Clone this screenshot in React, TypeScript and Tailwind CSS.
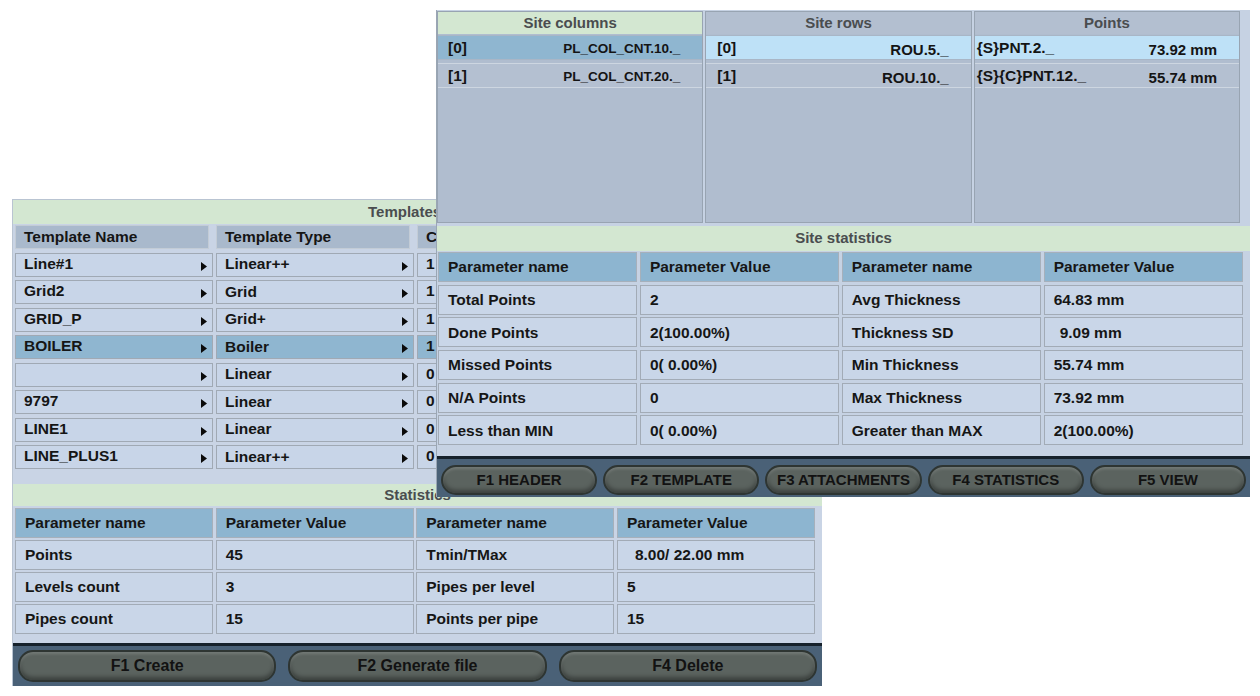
import React from "react";

const templates = [
  ["Line#1", "Linear++", "1"],
  ["Grid2", "Grid", "1"],
  ["GRID_P", "Grid+", "1"],
  ["BOILER", "Boiler", "1"],
  ["", "Linear", "0"],
  ["9797", "Linear", "0"],
  ["LINE1", "Linear", "0"],
  ["LINE_PLUS1", "Linear++", "0"],
];

const templateStats = [
  ["Points", "45", "Tmin/TMax", "8.00/ 22.00 mm", 8],
  ["Levels count", "3", "Pipes per level", "5", 0],
  ["Pipes count", "15", "Points per pipe", "15", 0],
] as const;

const siteStats = [
  ["Total Points", "2", "Avg Thickness", "64.83 mm", 0],
  ["Done Points", "2(100.00%)", "Thickness SD", "9.09 mm", 6],
  ["Missed Points", "0( 0.00%)", "Min Thickness", "55.74 mm", 0],
  ["N/A Points", "0", "Max Thickness", "73.92 mm", 0],
  ["Less than MIN", "0( 0.00%)", "Greater than MAX", "2(100.00%)", 0],
] as const;

function Arrow() {
  return (
    <svg width="6" height="9" viewBox="0 0 6 9" className="absolute right-[5px] top-[8px]">
      <polygon points="0,0 6,4.5 0,9" fill="#0a0a0a" />
    </svg>
  );
}

function FKey({ label, small }: { label: string; small?: boolean }) {
  return (
    <div
      className={`h-full rounded-[15px] border-2 border-[#2e3532] bg-[#5b635f] shadow-[inset_0_2px_3px_rgba(255,255,255,0.16),inset_0_-3px_4px_rgba(0,0,0,0.35)] flex items-center justify-center font-bold text-[#121212] whitespace-nowrap ${
        small ? "text-[15px]" : "text-[16px]"
      }`}
    >
      {label}
    </div>
  );
}

function StatsHeader() {
  return (
    <>
      {["Parameter name", "Parameter Value", "Parameter name", "Parameter Value"].map((h, i) => (
        <div
          key={i}
          className="h-[30px] bg-[#8db5d0] border border-[#a6b0bb] flex items-center pl-[9px] font-bold text-[15.5px] text-[#161616]"
        >
          {h}
        </div>
      ))}
    </>
  );
}

function StatCell({ text, indent = 0 }: { text: string; indent?: number }) {
  return (
    <div className="h-[30px] bg-[#c9d6e8] border border-[#a2abb6] flex items-center pl-[9px] font-bold text-[15.5px] text-[#161616] whitespace-pre">
      <span style={{ marginLeft: indent }}>{text}</span>
    </div>
  );
}

function SitePanel({
  title,
  active,
  rows,
  firstBg,
  padLeft,
}: {
  title: string;
  active: boolean;
  rows: { left: string; right: string; small: boolean }[];
  firstBg: string;
  padLeft: string;
}) {
  return (
    <div className="flex flex-col border border-[#98a4b2] bg-[#b0bdcf]">
      <div
        className={`h-[22px] flex items-center justify-center text-[15px] font-bold text-[#4a4d4f] ${
          active ? "bg-[#d3e7d1]" : "bg-[#b3bfd0]"
        }`}
      >
        {title}
      </div>
      <div className="flex flex-col gap-[3px] pt-[1px]">
        {rows.map((r, i) => (
          <div
            key={i}
            className={`h-[25px] flex justify-between ${padLeft} pr-[22px] border-y ${
              i === 0 ? `${firstBg} border-[#a9b6c6]` : "bg-[#b4c0d1] border-[#cdd6e1]"
            }`}
          >
            <span className="self-end text-[15.5px] font-bold text-[#141414]">{r.left}</span>
            <span
              className={`self-start pt-[3px] font-bold text-[#141414] ${
                r.small ? "text-[13.5px]" : "text-[15px]"
              }`}
            >
              {r.right}
            </span>
          </div>
        ))}
      </div>
    </div>
  );
}

export default function App() {
  return (
    <div className="relative w-[1260px] h-[696px] bg-white overflow-hidden font-['Liberation_Sans',Arial,sans-serif]">
      {/* Templates window */}
      <div className="absolute left-[12px] top-[199px] w-[810px] h-[487px] bg-[#c9d4e5] border-l border-t border-[#b9c4d2] flex flex-col">
        <div className="h-[24px] bg-[#d3e7d1] flex items-center justify-center text-[15px] font-bold text-[#4a4d4f]">
          Templates list
        </div>
        <div className="grid grid-cols-4 gap-x-[3px] gap-y-[3.5px] pl-[2px] pr-[6px] pt-[1px]">
          {["Template Name", "Template Type", "Count", ""].map((h, i) => (
            <div
              key={i}
              className="h-[24px] bg-[#a9b9cc] border border-[#c3ccd6] mr-[4px] flex items-center pl-[8px] text-[15.5px] font-bold text-[#151515]"
            >
              {h}
            </div>
          ))}
          {templates.map((row, r) =>
            [...row, ""].map((cell, c) => {
              const sel = r === 3;
              return (
                <div
                  key={`${r}-${c}`}
                  className={`relative h-[24px] border border-[#a0a9b4] flex pl-[8px] text-[15.5px] font-bold text-[#151515] ${
                    sel ? "bg-[#8fb6d0]" : "bg-[#c8d5e8]"
                  } ${c === 1 ? "items-end" : "items-center pb-[2px]"}`}
                >
                  {cell}
                  {c < 2 && <Arrow />}
                </div>
              );
            })
          )}
        </div>
        <div className="mt-[15px] h-[22px] bg-[#d3e7d1] flex items-center justify-center text-[15px] font-bold text-[#4a4d4f]">
          Statistics
        </div>
        <div className="grid grid-cols-4 gap-x-[2.5px] gap-y-[2px] pl-[2px] pr-[7px] pt-[2px]">
          <StatsHeader />
          {templateStats.map((row, r) => (
            <React.Fragment key={r}>
              <StatCell text={row[0]} />
              <StatCell text={row[1]} />
              <StatCell text={row[2]} />
              <StatCell text={row[3]} indent={row[4]} />
            </React.Fragment>
          ))}
        </div>
        <div className="flex-1" />
        <div className="border-t-[3px] border-[#16212b] bg-[#4a6177] h-[43px] px-[5px] py-[4px] grid grid-cols-3 gap-[12px]">
          <FKey label="F1 Create" />
          <FKey label="F2 Generate file" />
          <FKey label="F4 Delete" />
        </div>
      </div>

      {/* Site window */}
      <div className="absolute left-[436px] top-[10px] w-[814px] h-[487px] bg-[#c6d2e3] border-l border-[#9aa6b4] flex flex-col">
        <div className="h-[213px] grid grid-cols-3 gap-x-[2px] pt-[1px] pr-[10px]">
          <SitePanel
            title="Site columns"
            active
            firstBg="bg-[#8fb6d0]"
            padLeft="pl-[10px]"
            rows={[
              { left: "[0]", right: "PL_COL_CNT.10._", small: true },
              { left: "[1]", right: "PL_COL_CNT.20._", small: true },
            ]}
          />
          <SitePanel
            title="Site rows"
            active={false}
            firstBg="bg-[#bee1f7]"
            padLeft="pl-[11px]"
            rows={[
              { left: "[0]", right: "ROU.5._", small: false },
              { left: "[1]", right: "ROU.10._", small: false },
            ]}
          />
          <SitePanel
            title="Points"
            active={false}
            firstBg="bg-[#bee1f7]"
            padLeft="pl-[2px]"
            rows={[
              { left: "{S}PNT.2._", right: "73.92 mm", small: false },
              { left: "{S}{C}PNT.12._", right: "55.74 mm", small: false },
            ]}
          />
        </div>
        <div className="mt-[3px] h-[25px] bg-[#d3e7d1] flex items-center justify-center text-[15px] font-bold text-[#4a4d4f]">
          Site statistics
        </div>
        <div className="grid grid-cols-4 gap-x-[2.5px] gap-y-[2.7px] pl-[1px] pr-[7px] pt-[1px]">
          <StatsHeader />
          {siteStats.map((row, r) => (
            <React.Fragment key={r}>
              <StatCell text={row[0]} />
              <StatCell text={row[1]} />
              <StatCell text={row[2]} />
              <StatCell text={row[3]} indent={row[4]} />
            </React.Fragment>
          ))}
        </div>
        <div className="flex-1" />
        <div className="border-t-[3px] border-[#16212b] bg-[#4a6177] h-[41px] px-[4px] pt-[6px] pb-[2px] grid grid-cols-5 gap-[6px]">
          <FKey small label="F1 HEADER" />
          <FKey small label="F2 TEMPLATE" />
          <FKey small label="F3 ATTACHMENTS" />
          <FKey small label="F4 STATISTICS" />
          <FKey small label="F5 VIEW" />
        </div>
      </div>
    </div>
  );
}
